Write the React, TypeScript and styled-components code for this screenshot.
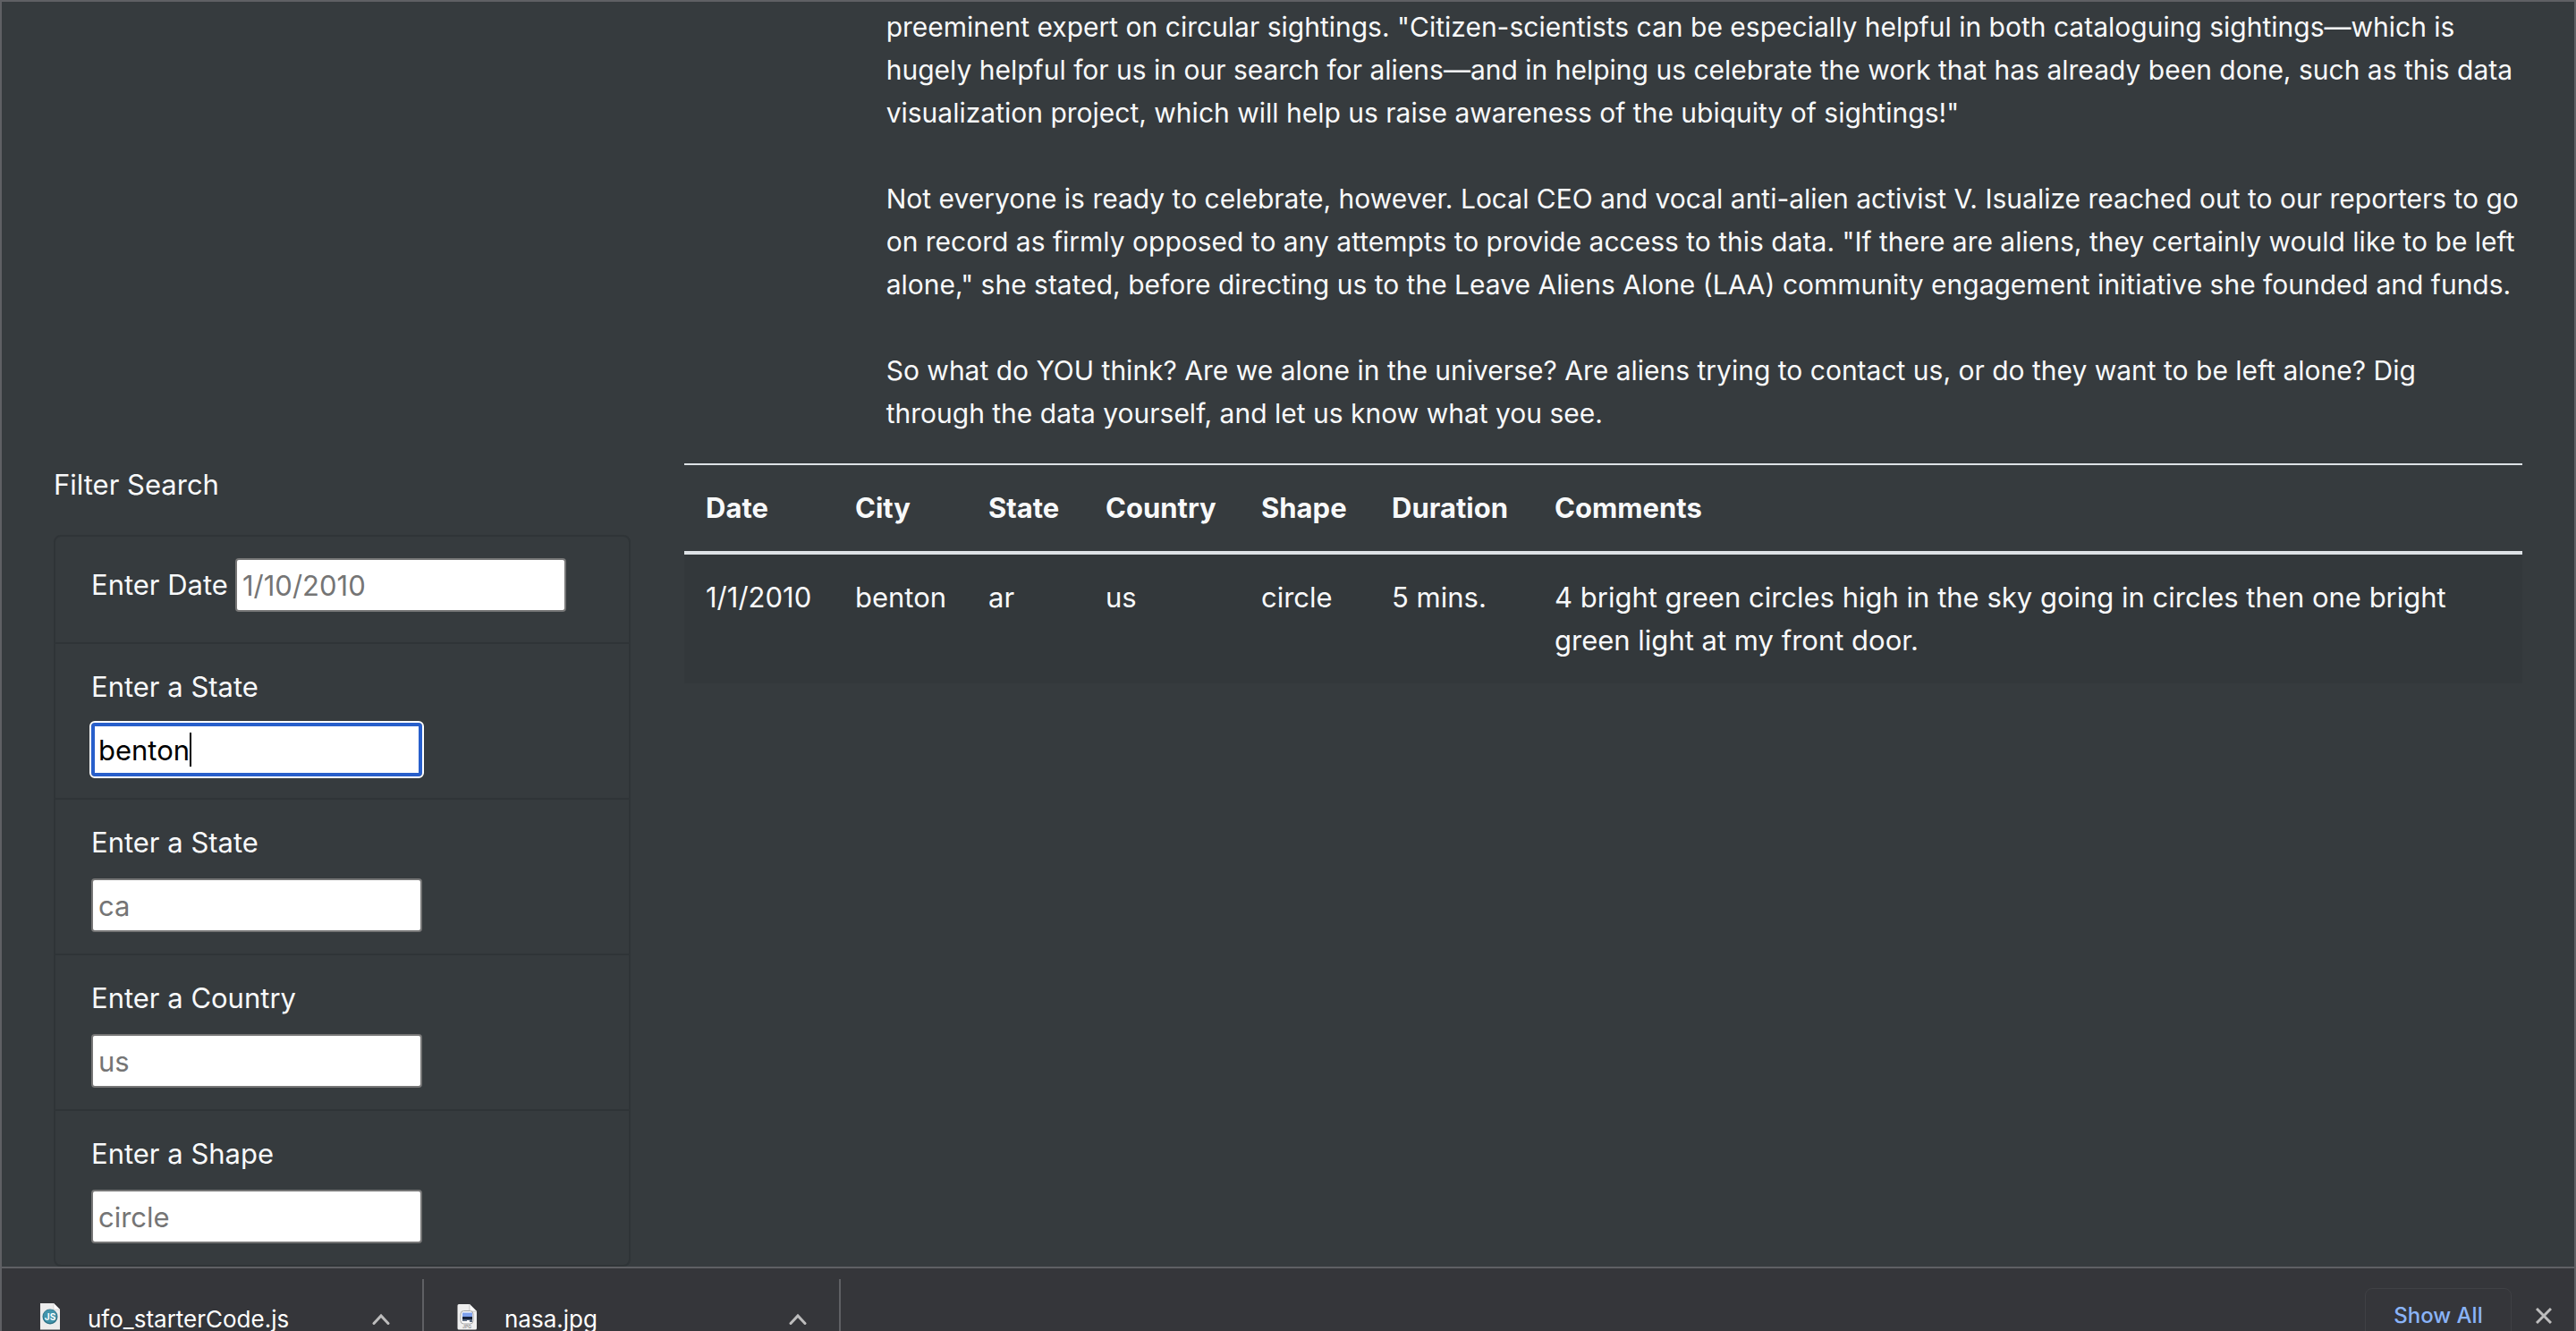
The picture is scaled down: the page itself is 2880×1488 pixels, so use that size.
import React, { useState } from 'react';
import styled, { createGlobalStyle } from 'styled-components';

const GlobalStyle = createGlobalStyle`
  *, *::before, *::after { box-sizing: border-box; }
  html, body { margin: 0; }
  body {
    background: #363b3e;
    color: #f8f9fa;
    font: 400 31px/48px Inter, "Liberation Sans", sans-serif;
  }
`;

const Window = styled.div`
  display: flex;
  flex-direction: column;
  height: 100vh;
  overflow: hidden;
  border: 2px solid #5f6064;
  border-bottom: 0;
  background: #363b3e;
`;

const Page = styled.main`
  flex: 1;
  min-height: 0;
  overflow: hidden;
  padding-top: 4px;
`;

const Article = styled.article`
  margin-left: calc(100% / 3);
  padding: 0 30px;
  font-size: 30px;
`;

const Paragraph = styled.p`
  margin: 0 0 48px;

  &:last-child { margin-bottom: 32px; }
`;

const Columns = styled.div`
  display: grid;
  grid-template-columns: 1fr 3fr;
  padding: 0 28px;
`;

const Column = styled.section`
  min-width: 0;
  padding: 0 30px;
`;

const FilterTitle = styled.p`
  margin: 0 0 32px;
`;

const FilterList = styled.ul`
  list-style: none;
  margin: 0;
  padding: 0;
  border: 2px solid #2f3437;
  border-radius: 8px;
`;

const FilterItem = styled.li<{ $inline?: boolean }>`
  display: flex;
  flex-direction: ${(p) => (p.$inline ? 'row' : 'column')};
  align-items: ${(p) => (p.$inline ? 'center' : 'flex-start')};
  gap: ${(p) => (p.$inline ? '8px' : '16px')};
  padding: ${(p) => (p.$inline ? '24px 40px 34px' : '24px 40px')};

  & + & { border-top: 2px solid #2f3437; }
`;

const Field = styled.div`
  position: relative;
  display: flex;
`;

const TextInput = styled.input<{ $active?: boolean }>`
  width: 370px;
  height: 60px;
  padding: ${(p) => (p.$active ? '0 4px' : '0 6px')};
  border: ${(p) => (p.$active ? '4px solid #285fcb' : '2px solid #767676')};
  border-radius: 4px;
  outline: ${(p) => (p.$active ? '2px solid #fff' : 'none')};
  background: #fff;
  color: #000;
  font: inherit;

  &::placeholder { color: #757575; opacity: 1; }
`;

const Caret = styled.span`
  position: absolute;
  top: 11px;
  left: 110px;
  width: 2px;
  height: 38px;
  background: #000;
`;

const Table = styled.table`
  width: 100%;
  table-layout: fixed;
  border-spacing: 0;
  text-align: left;
`;

const Col = styled.col<{ $width?: number }>`
  width: ${(p) => (p.$width ? `${p.$width}px` : 'auto')};
`;

const HeadCell = styled.th`
  padding: 24px;
  border-top: 2px solid #dee2e6;
  border-bottom: 4px solid #dee2e6;
  font-weight: 700;
`;

const Cell = styled.td`
  padding: 24px;
  background: #33383b;
  vertical-align: top;
`;

const Shelf = styled.footer`
  display: flex;
  align-items: flex-start;
  flex: none;
  height: 72px;
  padding-top: 12px;
  border-top: 2px solid #5f6064;
  background: #35363a;
  font-size: 26px;
  line-height: 26px;
`;

const Download = styled.div`
  display: flex;
  align-items: center;
  width: 466px;
  height: 90px;
  padding: 0 36px;
  border-right: 2px solid #5f6064;
  gap: 30px;

  &:first-child { width: 472px; padding-left: 42px; }
`;

const FileName = styled.span`
  flex: 1;
  color: #fff;
`;

const IconButton = styled.button`
  display: flex;
  padding: 0;
  border: 0;
  background: none;
  color: #bdbdbd;
`;

const ShelfActions = styled.div`
  display: flex;
  align-items: center;
  gap: 27px;
  margin-left: auto;
  padding: 10px 25px 0 0;
`;

const ShowAll = styled.button`
  width: 164px;
  height: 62px;
  padding: 0;
  border: 1px solid #404145;
  border-radius: 8px;
  background: none;
  color: #8ab4f8;
  font: 500 24px/30px Inter, "Liberation Sans", sans-serif;
`;

const ScriptIcon = () => (
  <svg width="24" height="36" viewBox="0 0 24 36" aria-hidden="true">
    <path d="M1 0h15l7 7v22.500H1z" fill="#ececec" />
    <path d="M16 0v7h7z" fill="#fff" stroke="#c4c4c4" strokeWidth=".6" />
    <circle cx="12" cy="15" r="8.500" fill="#2b7187" />
    <circle cx="12" cy="14.500" r="7.500" fill="#4394ab" />
    <text x="12" y="18.500" textAnchor="middle" fontSize="10" fontWeight="700" fill="#fff">JS</text>
  </svg>
);

const ImageIcon = () => (
  <svg width="24" height="36" viewBox="0 0 24 36" aria-hidden="true">
    <path d="M3 1h12l8 8v19a1.500 1.500 0 0 1-1.500 1.500H3A1.500 1.500 0 0 1 1.500 28V2.500A1.500 1.500 0 0 1 3 1z" fill="#efefef" />
    <path d="M15 1v8h8z" fill="#fff" stroke="#bbb" strokeWidth=".8" />
    <rect x="5" y="8.500" width="14" height="14.500" rx="3.500" fill="#fafafa" stroke="#a5a5a5" />
    <rect x="7" y="10.500" width="11" height="5" fill="#7ea0ec" />
    <rect x="7" y="15" width="11" height="3" fill="#17233b" />
    <path d="M7 18h11v3h-3v-2h-3v1H7z" fill="#5b6a80" />
    <text x="12" y="28" textAnchor="middle" fontSize="5" fontWeight="700" fill="#9a9a9a">JPG</text>
  </svg>
);

const Chevron = () => (
  <svg width="20" height="14" viewBox="0 0 20 14" fill="none" stroke="currentColor" strokeWidth="3" aria-hidden="true">
    <path d="M2 11.500 10 3l8 8.500" strokeLinecap="round" />
  </svg>
);

const filters = [
  { id: 'date', label: 'Enter Date', placeholder: '1/10/2010' },
  { id: 'city', label: 'Enter a State', placeholder: '' },
  { id: 'state', label: 'Enter a State', placeholder: 'ca' },
  { id: 'country', label: 'Enter a Country', placeholder: 'us' },
  { id: 'shape', label: 'Enter a Shape', placeholder: 'circle' },
];

const columns = [
  { title: 'Date', width: 167 },
  { title: 'City', width: 149 },
  { title: 'State', width: 131 },
  { title: 'Country', width: 174 },
  { title: 'Shape', width: 146 },
  { title: 'Duration', width: 182 },
  { title: 'Comments' },
];

const sightings = [
  ['1/1/2010', 'benton', 'ar', 'us', 'circle', '5 mins.', '4 bright green circles high in the sky going in circles then one bright green light at my front door.'],
];

const downloads = [
  { name: 'ufo_starterCode.js', Icon: ScriptIcon },
  { name: 'nasa.jpg', Icon: ImageIcon },
];

export default function App() {
  const [values, setValues] = useState<Record<string, string>>({ city: 'benton' });

  return (
    <>
      <GlobalStyle />
      <Window>
        <Page>
          <Article>
            <Paragraph>
              preeminent expert on circular sightings. "Citizen-scientists can be especially helpful in both cataloguing sightings—which is<br />
              hugely helpful for us in our search for aliens—and in helping us celebrate the work that has already been done, such as this data<br />
              visualization project, which will help us raise awareness of the ubiquity of sightings!"
            </Paragraph>
            <Paragraph>
              Not everyone is ready to celebrate, however. Local CEO and vocal anti-alien activist V. Isualize reached out to our reporters to go<br />
              on record as firmly opposed to any attempts to provide access to this data. "If there are aliens, they certainly would like to be left<br />
              alone," she stated, before directing us to the Leave Aliens Alone (LAA) community engagement initiative she founded and funds.
            </Paragraph>
            <Paragraph>
              So what do YOU think? Are we alone in the universe? Are aliens trying to contact us, or do they want to be left alone? Dig<br />
              through the data yourself, and let us know what you see.
            </Paragraph>
          </Article>
          <Columns>
            <Column>
              <FilterTitle>Filter Search</FilterTitle>
              <FilterList>
                {filters.map((f) => (
                  <FilterItem key={f.id} $inline={f.id === 'date'}>
                    <label htmlFor={f.id}>{f.label}</label>
                    <Field>
                      <TextInput
                        id={f.id}
                        type="text"
                        $active={f.id === 'city'}
                        placeholder={f.placeholder}
                        value={values[f.id] ?? ''}
                        onChange={(e) => setValues({ ...values, [f.id]: e.target.value })}
                      />
                      {f.id === 'city' && <Caret />}
                    </Field>
                  </FilterItem>
                ))}
              </FilterList>
            </Column>
            <Column>
              <Table>
                <colgroup>
                  {columns.map((c) => <Col key={c.title} $width={c.width} />)}
                </colgroup>
                <thead>
                  <tr>{columns.map((c) => <HeadCell key={c.title} scope="col">{c.title}</HeadCell>)}</tr>
                </thead>
                <tbody>
                  {sightings.map((row, i) => (
                    <tr key={i}>{row.map((v, j) => <Cell key={j}>{v}</Cell>)}</tr>
                  ))}
                </tbody>
              </Table>
            </Column>
          </Columns>
        </Page>
        <Shelf>
          {downloads.map(({ name, Icon }) => (
            <Download key={name}>
              <Icon />
              <FileName>{name}</FileName>
              <IconButton type="button" aria-label={`Options for ${name}`}><Chevron /></IconButton>
            </Download>
          ))}
          <ShelfActions>
            <ShowAll type="button">Show All</ShowAll>
            <IconButton type="button" aria-label="Close">
              <svg width="18" height="18" viewBox="0 0 18 18" stroke="currentColor" strokeWidth="3" aria-hidden="true">
                <path d="M1 1l16 16M17 1 1 17" />
              </svg>
            </IconButton>
          </ShelfActions>
        </Shelf>
      </Window>
    </>
  );
}
